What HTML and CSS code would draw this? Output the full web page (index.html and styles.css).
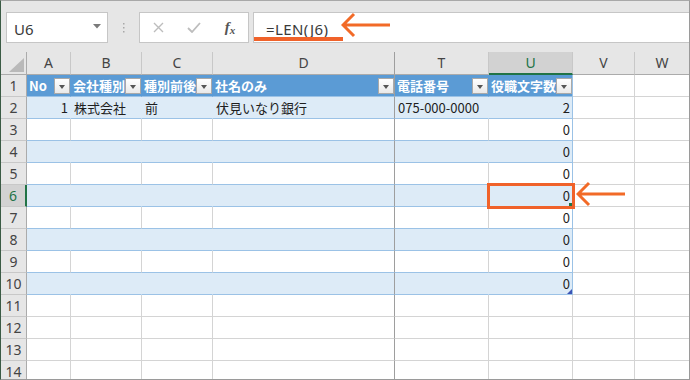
FILE: index.html
```html
<!DOCTYPE html>
<html lang="ja">
<head>
<meta charset="utf-8">
<title>Excel LEN</title>
<link rel="stylesheet" href="styles.css">
</head>
<body>
<div class="window">
  <div class="toolbar">
    <div class="namebox">
      <span class="nb-text">U6</span>
      <svg class="nb-caret" width="8" height="5" viewBox="0 0 8 5"><path d="M0 0H8L4 4.5Z" fill="#7a7a7a"/></svg>
    </div>
    <div class="grip">
      <svg width="3" height="12" viewBox="0 0 3 12"><rect x="1" y="1" width="1.5" height="1.5" fill="#a8a8a8"/><rect x="1" y="5" width="1.5" height="1.5" fill="#a8a8a8"/><rect x="1" y="9" width="1.5" height="1.5" fill="#a8a8a8"/></svg>
    </div>
    <div class="fxbtns">
      <span class="fxb"><svg width="11" height="11" viewBox="0 0 11 11"><path d="M1 1L10 10M10 1L1 10" stroke="#bdbdbd" stroke-width="1.4" fill="none"/></svg></span>
      <span class="fxb"><svg width="14" height="11" viewBox="0 0 14 11"><path d="M1 6L5 10L13 1" stroke="#bdbdbd" stroke-width="1.8" fill="none"/></svg></span>
      <span class="fxb fx"><i>f</i><i class="sub">x</i></span>
    </div>
    <div class="formula"><span class="f-text">=LEN(J6)</span></div>
  </div>

  <div class="sheet">
    <div class="row hdr">
      <div class="corner"><svg width="15" height="14" viewBox="0 0 15 14"><path d="M15 0V14H0Z" fill="#b9b9b9"/></svg></div>
      <div class="ch">A</div><div class="ch">B</div><div class="ch">C</div><div class="ch d">D</div><div class="ch">T</div><div class="ch sel">U</div><div class="ch">V</div><div class="ch last">W</div>
    </div>

    <div class="row th t">
      <div class="rh">1</div>
      <div class="c"><span class="tx">No</span><span class="fb"></span></div>
      <div class="c"><span class="tx">会社種別</span><span class="fb"></span></div>
      <div class="c"><span class="tx">種別前後</span><span class="fb"></span></div>
      <div class="c d"><span class="tx">社名のみ</span><span class="fb"></span></div>
      <div class="c"><span class="tx">電話番号</span><span class="fb"></span></div>
      <div class="c u"><span class="tx">役職文字数</span><span class="fb"></span></div>
      <div class="x"></div><div class="x last"></div>
    </div>

    <div class="row band t">
      <div class="rh">2</div>
      <div class="c num">1</div><div class="c">株式会社</div><div class="c">前</div><div class="c d">伏見いなり銀行</div><div class="c">075-000-0000</div><div class="c u num">2</div>
      <div class="x"></div><div class="x last"></div>
    </div>
    <div class="row plain t">
      <div class="rh">3</div>
      <div class="c"></div><div class="c"></div><div class="c"></div><div class="c d"></div><div class="c"></div><div class="c u num">0</div>
      <div class="x"></div><div class="x last"></div>
    </div>
    <div class="row band t">
      <div class="rh">4</div>
      <div class="c"></div><div class="c"></div><div class="c"></div><div class="c d"></div><div class="c"></div><div class="c u num">0</div>
      <div class="x"></div><div class="x last"></div>
    </div>
    <div class="row plain t">
      <div class="rh">5</div>
      <div class="c"></div><div class="c"></div><div class="c"></div><div class="c d"></div><div class="c"></div><div class="c u num">0</div>
      <div class="x"></div><div class="x last"></div>
    </div>
    <div class="row band t">
      <div class="rh sel">6</div>
      <div class="c"></div><div class="c"></div><div class="c"></div><div class="c d"></div><div class="c"></div><div class="c u num active">0<span class="selbox"></span><span class="handle"></span></div>
      <div class="x"></div><div class="x last"></div>
    </div>
    <div class="row plain t">
      <div class="rh">7</div>
      <div class="c"></div><div class="c"></div><div class="c"></div><div class="c d"></div><div class="c"></div><div class="c u num">0</div>
      <div class="x"></div><div class="x last"></div>
    </div>
    <div class="row band t">
      <div class="rh">8</div>
      <div class="c"></div><div class="c"></div><div class="c"></div><div class="c d"></div><div class="c"></div><div class="c u num">0</div>
      <div class="x"></div><div class="x last"></div>
    </div>
    <div class="row plain t">
      <div class="rh">9</div>
      <div class="c"></div><div class="c"></div><div class="c"></div><div class="c d"></div><div class="c"></div><div class="c u num">0</div>
      <div class="x"></div><div class="x last"></div>
    </div>
    <div class="row band t">
      <div class="rh">10</div>
      <div class="c"></div><div class="c"></div><div class="c"></div><div class="c d"></div><div class="c"></div><div class="c u num corner-cell">0<span class="resize"></span></div>
      <div class="x"></div><div class="x last"></div>
    </div>
    <div class="row">
      <div class="rh">11</div>
      <div class="x"></div><div class="x"></div><div class="x"></div><div class="x d"></div><div class="x"></div><div class="x"></div><div class="x"></div><div class="x last"></div>
    </div>
    <div class="row">
      <div class="rh">12</div>
      <div class="x"></div><div class="x"></div><div class="x"></div><div class="x d"></div><div class="x"></div><div class="x"></div><div class="x"></div><div class="x last"></div>
    </div>
    <div class="row">
      <div class="rh">13</div>
      <div class="x"></div><div class="x"></div><div class="x"></div><div class="x d"></div><div class="x"></div><div class="x"></div><div class="x"></div><div class="x last"></div>
    </div>
    <div class="row">
      <div class="rh">14</div>
      <div class="x"></div><div class="x"></div><div class="x"></div><div class="x d"></div><div class="x"></div><div class="x"></div><div class="x"></div><div class="x last"></div>
    </div>
  </div>

  <span class="underline"></span>
  <svg class="arrow arrow-top" width="52" height="28" viewBox="0 0 52 28"><path d="M2 13H49M13 2L2 13L13 24" stroke="#f26a27" stroke-width="3" fill="none"/></svg>
  <svg class="arrow arrow-cell" width="52" height="28" viewBox="0 0 52 28"><path d="M2 13H49M13 2L2 13L13 24" stroke="#f26a27" stroke-width="3" fill="none"/></svg>
</div>
</body>
</html>
```

FILE: styles.css
```css
html, body {
  margin: 0;
  padding: 0;
  background: #ffffff;
}

.window {
  position: relative;
  width: 690px;
  height: 380px;
  box-sizing: border-box;
  border-top: 1px solid #a8a8a8;
  border-left: 1px solid #3b5b45;
  border-right: 1px solid #9a9a9a;
  border-bottom: 1px solid #9a9a9a;
  background: #e6e6e6;
  overflow: hidden;
  font-family: "Noto Sans CJK JP", "Noto Sans", sans-serif;
}

/* ---------- toolbar ---------- */
.toolbar {
  height: 51px;
  box-sizing: border-box;
  padding: 11px 0 0 5px;
  display: flex;
  align-items: flex-start;
  background: #e6e6e6;
}

.namebox {
  width: 102px;
  height: 31px;
  box-sizing: border-box;
  border: 1px solid #c6c6c6;
  background: #ffffff;
  display: flex;
  align-items: center;
  justify-content: space-between;
  padding: 0 6px 0 7px;
}

.nb-text {
  font-family: "Noto Sans", sans-serif;
  font-size: 15px;
  color: #3a3a3a;
  padding-top: 3px;
}

.nb-caret {
  margin-top: -2px;
}

.grip {
  width: 31px;
  height: 31px;
  display: flex;
  align-items: center;
  justify-content: center;
}

.fxbtns {
  width: 110px;
  height: 31px;
  box-sizing: border-box;
  border: 1px solid #c6c6c6;
  background: #ffffff;
  display: flex;
  align-items: center;
  padding-left: 0;
}

.fxb {
  width: 36px;
  height: 29px;
  display: flex;
  align-items: center;
  justify-content: center;
}

.fx {
  font-family: "Liberation Serif", serif;
  color: #555555;
  font-size: 15px;
  font-weight: bold;
}

.fx .sub {
  font-size: 11px;
  margin-top: 4px;
  margin-left: 0;
}

.formula {
  flex: 1;
  margin-left: 4px;
  height: 31px;
  box-sizing: border-box;
  border-top: 1px solid #c6c6c6;
  border-bottom: 1px solid #c6c6c6;
  border-left: 1px solid #c6c6c6;
  background: #ffffff;
  display: flex;
  align-items: center;
  padding-left: 12px;
}

.f-text {
  font-family: "Noto Sans", sans-serif;
  font-size: 15px;
  color: #3a3a3a;
  letter-spacing: 0.4px;
  padding-top: 2px;
}

/* ---------- sheet ---------- */
.sheet {
  background: #ffffff;
}

.row {
  display: grid;
  grid-template-columns: 26px 44px 71px 71px 182px 94px 84px 62px 54px;
  height: 22px;
}

.row > div {
  box-sizing: border-box;
  border-right: 1px solid #d4d4d4;
  border-bottom: 1px solid #d4d4d4;
  position: relative;
  font-size: 13px;
  line-height: 21px;
  color: #1e1e1e;
  padding: 0 3px;
  white-space: nowrap;
  overflow: hidden;
}

.row > .last {
  border-right: none;
}

/* column letters */
.hdr {
  height: 23px;
}

.hdr > div {
  background: #e6e6e6;
  border-right-color: #c8c8c8;
  border-bottom-color: #ababab;
  text-align: center;
  font-family: "Noto Sans", sans-serif;
  font-size: 14px;
  line-height: 22px;
  color: #444444;
  padding: 0;
}

.hdr > .corner {
  border-right-color: #ababab;
  display: flex;
  align-items: flex-end;
  justify-content: flex-end;
  padding: 0 2px 2px 0;
}

.hdr > .sel {
  background: #d2d2d2;
  border-bottom: 2px solid #217346;
  color: #217346;
  line-height: 21px;
}

/* row headers */
.row > .rh {
  background: #e6e6e6;
  border-right-color: #ababab;
  border-bottom-color: #c8c8c8;
  text-align: center;
  font-family: "Noto Sans", sans-serif;
  font-size: 14px;
  color: #444444;
  padding: 0;
}

.row > .rh.sel {
  background: #d2d2d2;
  border-right: 2px solid #217346;
  color: #217346;
}

/* table rows */
.plain > .c {
  border-bottom-color: #9bc2e6;
}

.band > .c {
  background: #ddebf7;
  border-right-color: #ddebf7;
  border-bottom-color: #9bc2e6;
}

.th > .c {
  background: #5b9bd5;
  border-right-color: #5b9bd5;
  border-bottom-color: #9bc2e6;
  color: #ffffff;
  font-weight: bold;
  padding-left: 2px;
}

.row > .d {
  border-right-color: #9e9e9e;
}

.t > .u {
  border-right-color: #9bc2e6;
}

.th > .c.u {
  border-right-color: #9bc2e6;
}

.row > .num {
  text-align: right;
  padding-right: 2px;
}

.tx {
  display: block;
  overflow: hidden;
}

.fb {
  position: absolute;
  right: 0;
  top: 3px;
  width: 16px;
  height: 16px;
  box-sizing: border-box;
  border: 1px solid #a9a9a9;
  background: linear-gradient(#ffffff, #e9e9e9);
}

.fb::after {
  content: "";
  position: absolute;
  left: 4px;
  top: 6px;
  border-left: 3.5px solid transparent;
  border-right: 3.5px solid transparent;
  border-top: 4px solid #555555;
}

/* active cell */
.row > .active {
  overflow: visible;
  z-index: 2;
}

.selbox {
  position: absolute;
  left: -2px;
  right: -3px;
  top: -2px;
  bottom: -3px;
  border: 3px solid #f0622a;
  pointer-events: none;
}

.handle {
  position: absolute;
  right: 0;
  bottom: 0;
  width: 3px;
  height: 3px;
  background: #217346;
}

.row > .corner-cell {
  overflow: visible;
}

.resize {
  position: absolute;
  right: 0;
  bottom: 0;
  width: 0;
  height: 0;
  border-left: 5px solid transparent;
  border-bottom: 5px solid #3c55b5;
}

/* annotations */
.underline {
  position: absolute;
  left: 253px;
  top: 36px;
  width: 89px;
  height: 4px;
  background: #f0622a;
}

.arrow {
  position: absolute;
}

.arrow-top {
  left: 340px;
  top: 11px;
}

.arrow-cell {
  left: 575px;
  top: 180px;
}
```
